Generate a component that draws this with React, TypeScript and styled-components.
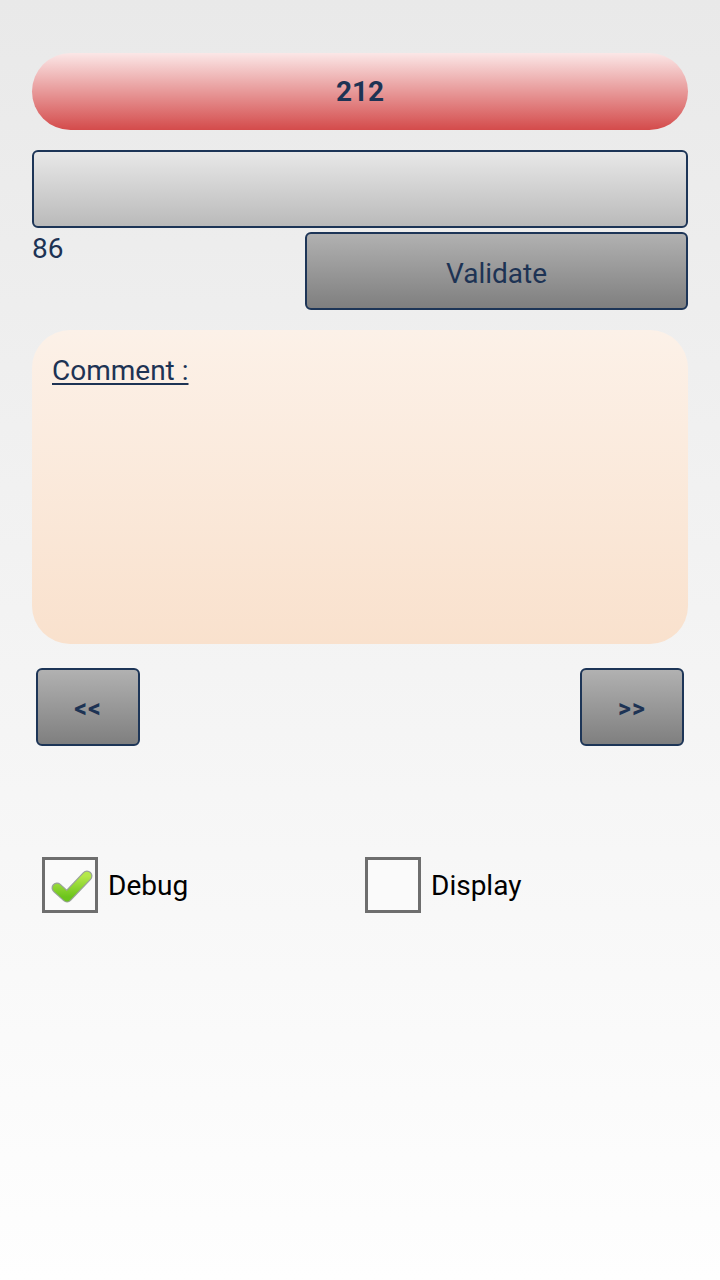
import styled, { createGlobalStyle } from 'styled-components';

const Global = createGlobalStyle`
  html, body {
    margin: 0;
    padding: 0;
  }
  body {
    font-family: Roboto, "Noto Sans", sans-serif;
  }
`;

const Page = styled.main`
  min-height: 1280px;
  box-sizing: border-box;
  padding: 53px 32px 0;
  background: linear-gradient(#e9e9e9, #fefefe);
  display: flex;
  flex-direction: column;
  color: #1d3354;
`;

const Score = styled.div`
  height: 77px;
  border-radius: 39px;
  background: linear-gradient(#fbe7e7, #d44b4b);
  display: flex;
  align-items: center;
  justify-content: center;
  font-size: 28px;
  font-weight: 700;
`;

const Field = styled.div`
  margin-top: 20px;
  height: 78px;
  box-sizing: border-box;
  border: 2px solid #1d3557;
  border-radius: 6px;
  background: linear-gradient(#e8e8e8, #bababa);
`;

const ActionRow = styled.div`
  margin-top: 4px;
  display: flex;
  justify-content: space-between;
  align-items: flex-start;
`;

const Count = styled.div`
  font-size: 28px;
  line-height: 32px;
  margin-top: 1px;
`;

const GreyButton = styled.button<{ $width: number }>`
  width: ${(p) => p.$width}px;
  height: 78px;
  box-sizing: border-box;
  border: 2px solid #1d3557;
  border-radius: 6px;
  background: linear-gradient(#b1b1b1, #7f7f7f);
  color: #1d3354;
  font-family: Roboto, sans-serif;
  display: flex;
  align-items: center;
  justify-content: center;
  padding: 0;
`;

const ValidateText = styled.span`
  font-size: 28px;
  margin-top: 4px;
`;

const CommentBox = styled.div`
  margin-top: 20px;
  height: 314px;
  border-radius: 38px;
  background: linear-gradient(#fcf1e8, #f9e1cd);
  padding: 24px 20px;
  box-sizing: border-box;
`;

const CommentLabel = styled.span`
  font-size: 28px;
  text-decoration: underline;
  text-decoration-thickness: 2px;
  text-underline-offset: 3px;
`;

const NavRow = styled.div`
  margin-top: 24px;
  padding: 0 4px;
  display: flex;
  justify-content: space-between;
`;

const NavText = styled.span`
  font-size: 25px;
  font-weight: 700;
  letter-spacing: 1px;
  margin-top: 2px;
`;

const OptionRow = styled.div`
  margin-top: 111px;
  padding-left: 10px;
  display: flex;
`;

const Option = styled.label<{ $width?: number }>`
  display: flex;
  align-items: center;
  gap: 10px;
  width: ${(p) => (p.$width ? `${p.$width}px` : 'auto')};
  font-size: 28px;
  color: #000;
`;

const Box = styled.span`
  width: 56px;
  height: 56px;
  box-sizing: border-box;
  border: 3px solid #6e6e6e;
  background: #fafafa;
  position: relative;
`;

const Tick = styled.svg`
  position: absolute;
  left: -3px;
  top: -3px;
`;

function Check() {
  return (
    <Tick width="56" height="56" viewBox="0 0 56 56">
      <defs>
        <linearGradient id="tick" x1="0" y1="0" x2="0" y2="1">
          <stop offset="0" stopColor="#b4e84a" />
          <stop offset="1" stopColor="#6cc41c" />
        </linearGradient>
      </defs>
      <polyline
        points="15,31 25,40 45,19"
        fill="none"
        stroke="#9aa39a"
        strokeWidth="11"
        strokeLinecap="round"
        strokeLinejoin="round"
      />
      <polyline
        points="15,31 25,40 45,19"
        fill="none"
        stroke="url(#tick)"
        strokeWidth="8.5"
        strokeLinecap="round"
        strokeLinejoin="round"
      />
    </Tick>
  );
}

export default function App() {
  return (
    <>
      <Global />
      <Page>
        <Score>212</Score>
        <Field />
        <ActionRow>
          <Count>86</Count>
          <GreyButton $width={383}>
            <ValidateText>Validate</ValidateText>
          </GreyButton>
        </ActionRow>
        <CommentBox>
          <CommentLabel>Comment :</CommentLabel>
        </CommentBox>
        <NavRow>
          <GreyButton $width={104}>
            <NavText>&lt;&lt;</NavText>
          </GreyButton>
          <GreyButton $width={104}>
            <NavText>&gt;&gt;</NavText>
          </GreyButton>
        </NavRow>
        <OptionRow>
          <Option $width={323}>
            <Box>
              <Check />
            </Box>
            Debug
          </Option>
          <Option>
            <Box />
            Display
          </Option>
        </OptionRow>
      </Page>
    </>
  );
}
